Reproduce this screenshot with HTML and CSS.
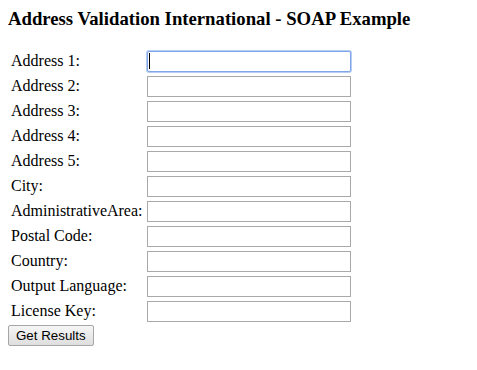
FILE: index.html
```html
<!DOCTYPE html>
<html lang="en">
<head>
  <meta charset="UTF-8">
  <title>Address Validation International - SOAP Example</title>
  <link rel="stylesheet" href="styles.css">
</head>
<body>
  <h3>Address Validation International - SOAP Example</h3>
  <form id="avForm">
    <table>
      <tr><td>Address 1:</td><td><span class="field"><input type="text" id="address1" class="focused"><span class="caret"></span></span></td></tr>
      <tr><td>Address 2:</td><td><input type="text" id="address2"></td></tr>
      <tr><td>Address 3:</td><td><input type="text" id="address3"></td></tr>
      <tr><td>Address 4:</td><td><input type="text" id="address4"></td></tr>
      <tr><td>Address 5:</td><td><input type="text" id="address5"></td></tr>
      <tr><td>City:</td><td><input type="text" id="city"></td></tr>
      <tr><td>AdministrativeArea:</td><td><input type="text" id="adminArea"></td></tr>
      <tr><td>Postal Code:</td><td><input type="text" id="postalCode"></td></tr>
      <tr><td>Country:</td><td><input type="text" id="country"></td></tr>
      <tr><td>Output Language:</td><td><input type="text" id="outputLanguage"></td></tr>
      <tr><td>License Key:</td><td><input type="text" id="licenseKey"></td></tr>
    </table>
    <button type="button">Get Results</button>
  </form>
</body>
</html>
```

FILE: styles.css
```css
body {
  font-family: "Liberation Serif", "Times New Roman", serif;
  font-size: 16px;
  color: #000;
  background: #fff;
}

h3 {
  margin-top: 0;
  margin-bottom: 17.5px;
  font-size: 18.72px;
}

form {
  margin: 0;
}

td {
  padding: 1px;
}

input {
  box-sizing: border-box;
  width: 204px;
  height: 21px;
  padding: 1px 2px;
  border: 1px solid #a9a9a9;
  font-family: "Liberation Sans", Arial, sans-serif;
  font-size: 13.33px;
  display: block;
}

.field {
  position: relative;
  display: block;
}

input.focused {
  border-color: #7ea6e8;
  border-radius: 2px;
  box-shadow: 0 0 0 1px #b7cdf3;
}

.caret {
  position: absolute;
  left: 2px;
  top: 2px;
  width: 1px;
  height: 16px;
  background: #000;
}

button {
  box-sizing: border-box;
  height: 21px;
  padding: 1px 7px;
  font-family: "Liberation Sans", Arial, sans-serif;
  font-size: 13.33px;
  color: #000;
  background: linear-gradient(#f6f6f6, #dedede);
  border: 1px solid #a6a6a6;
  border-radius: 2px;
}
```
